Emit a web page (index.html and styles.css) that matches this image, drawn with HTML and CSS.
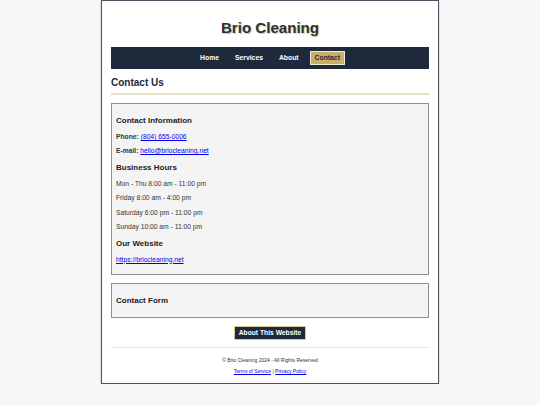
FILE: index.html
```html
<!DOCTYPE html>
<html lang="en">
<head>
<meta charset="utf-8">
<title>Brio Cleaning - Contact</title>
<link rel="stylesheet" href="styles.css">
</head>
<body>
<div class="page">
  <header class="site-header">
    <h1 class="site-title">Brio Cleaning</h1>
    <nav class="main-nav">
      <a href="#" class="nav-link">Home</a>
      <a href="#" class="nav-link">Services</a>
      <a href="#" class="nav-link">About</a>
      <a href="#" class="nav-link active">Contact</a>
    </nav>
  </header>
  <main>
    <h2 class="page-heading">Contact Us</h2>
    <section class="card">
      <h3 class="card-title">Contact Information</h3>
      <p class="line"><strong>Phone:</strong> <a href="#">(804) 655-0006</a></p>
      <p class="line"><strong>E-mail:</strong> <a href="#">hello@briocleaning.net</a></p>
      <h3 class="card-title">Business Hours</h3>
      <p class="line">Mon - Thu 8:00 am - 11:00 pm</p>
      <p class="line">Friday 8:00 am - 4:00 pm</p>
      <p class="line">Saturday 6:00 pm - 11:00 pm</p>
      <p class="line">Sunday 10:00 am - 11:00 pm</p>
      <h3 class="card-title">Our Website</h3>
      <p class="line"><a href="#">https://briocleaning.net</a></p>
    </section>
    <section class="card">
      <h3 class="card-title">Contact Form</h3>
    </section>
    <div class="button-row">
      <button class="about-btn">About This Website</button>
    </div>
  </main>
  <footer class="site-footer">
    <p class="copyright">© Brio Cleaning 2024 - All Rights Reserved</p>
    <p class="legal"><a href="#">Terms of Service</a> | <a href="#">Privacy Policy</a></p>
  </footer>
</div>
</body>
</html>
```
FILE: styles.css
```css
* { box-sizing: border-box; }
html, body { margin: 0; padding: 0; }
body {
  background: #f7f7f7;
  font-family: "Liberation Sans", Arial, sans-serif;
  font-size: 6.72px;
  color: #333;
}
.page {
  width: 338px;
  margin: 0 auto;
  background: #fff;
  border: 1px solid #4a5060;
  box-shadow: 0 1px 2px rgba(0,0,0,0.25);
  padding: 0 9px 4px;
}
.site-title {
  margin: 0;
  padding-top: 18px;
  text-align: center;
  font-size: 15.1px;
  line-height: 18px;
  font-weight: bold;
  color: #2b3040;
  text-shadow: 1px 1px 1px #d8c590;
}
.main-nav {
  margin-top: 10px;
  height: 22px;
  background: #1e293b;
  display: flex;
  justify-content: center;
  align-items: center;
  gap: 6px;
}
.nav-link {
  color: #fff;
  text-decoration: none;
  font-weight: bold;
  font-size: 6.8px;
  padding: 2px 4px;
  border: 1px solid transparent;
  line-height: 8px;
}
.nav-link.active {
  background: #c9ad6a;
  color: #1e293b;
  border-color: #f3ead2;
}
.page-heading {
  margin: 8px 0 0;
  font-size: 10px;
  line-height: 12px;
  color: #1e293b;
  padding-bottom: 4px;
  border-bottom: 2px solid #e8dfc4;
}
.card {
  margin-top: 8px;
  background: #f4f4f4;
  border: 1px solid #8a8d94;
  padding: 4px;
}
.card-title {
  font-size: 8px;
  margin: 7.8px 0;
  line-height: 9.2px;
  color: #222;
}
.card-title:first-child { margin-top: 8px; }
.card-title:last-child { margin-bottom: 7.5px; }
.line {
  margin: 6.7px 0;
  line-height: 7.7px;
}
.line a, .legal a { color: #0000ee; }
.button-row {
  margin-top: 8px;
  display: flex;
  justify-content: center;
}
.about-btn {
  font-family: "Liberation Sans", Arial, sans-serif;
  font-size: 6.72px;
  font-weight: bold;
  line-height: 7.7px;
  color: #fff;
  background: #1e293b;
  border: 1px solid #d8c590;
  padding: 2.5px 4px;
  margin: 0;
  border-radius: 0;
}
.site-footer {
  margin-top: 7px;
  border-top: 1px solid #ece4c9;
  text-align: center;
  font-size: 5px;
  padding-top: 4px;
}
.site-footer p {
  margin: 5px 0;
  line-height: 6px;
}
```
